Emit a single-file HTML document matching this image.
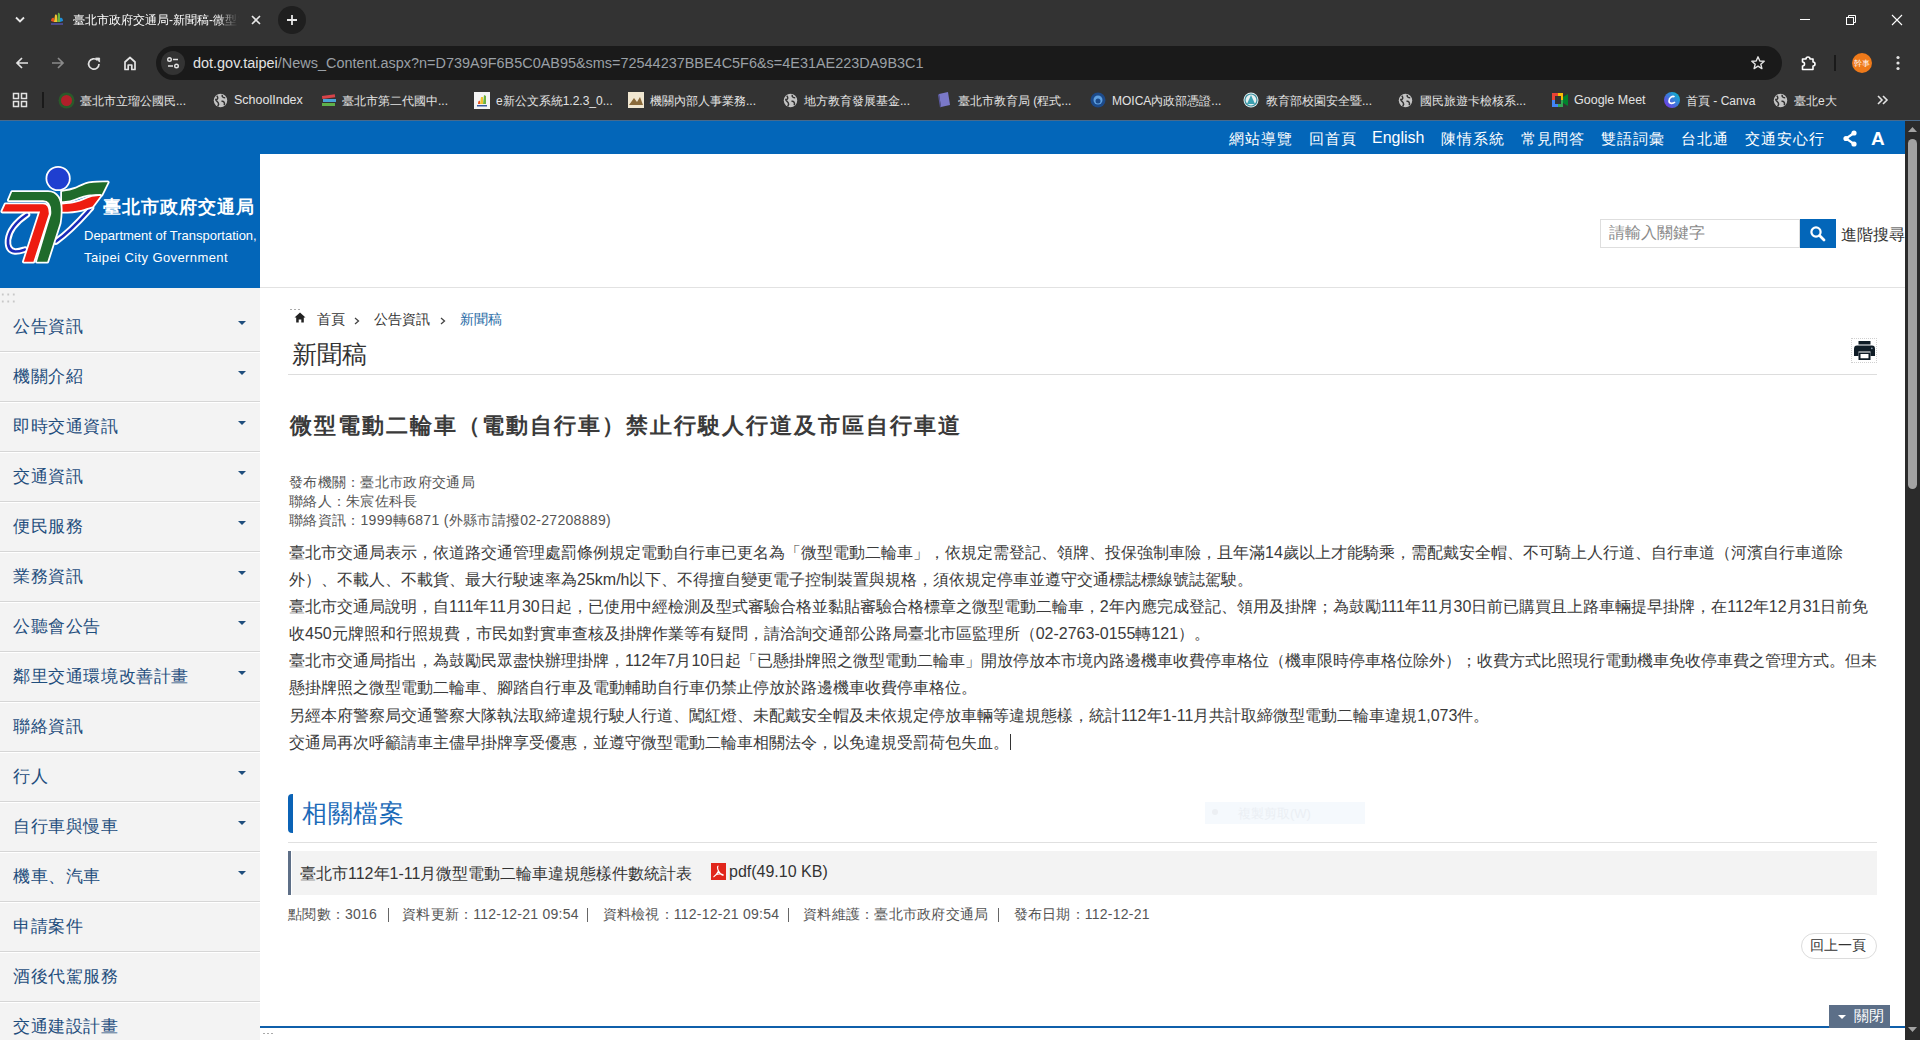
<!DOCTYPE html>
<html><head><meta charset="utf-8">
<style>
*{margin:0;padding:0;box-sizing:border-box}
html,body{width:1920px;height:1040px;overflow:hidden;background:#fff;font-family:"Liberation Sans",sans-serif}
.a{position:absolute}
#chrome{position:absolute;left:0;top:0;width:1920px;height:120px;background:#333333;color:#e3e3e3}
.ttl{position:absolute;white-space:nowrap}
#page{position:absolute;left:0;top:120px;width:1905px;height:920px;background:#fff;overflow:hidden}
#sb{position:absolute;left:1905px;top:120px;width:15px;height:920px;background:#2b2b2b}
#topnav{position:absolute;left:0;top:0;width:1905px;height:34px;background:#0366b9}
.tn{position:absolute;top:9.5px;color:#fff;font-size:15px;letter-spacing:1px;white-space:nowrap}
#logo{position:absolute;left:0;top:34px;width:260px;height:134px;background:#0366b9}
#hdr-line{position:absolute;left:260px;top:167px;width:1645px;height:1px;background:#e2e2e2}
#side{position:absolute;left:0;top:168px;width:260px;height:752px;background:#f3f3f3}
.si{position:absolute;left:0;width:260px;height:50px;border-bottom:1px solid #d6d6d6;box-shadow:0 1px 0 #fff;z-index:1}
.si span{position:absolute;left:13px;top:13px;font-size:17px;letter-spacing:0.6px;color:#1f4e7d;white-space:nowrap}
.si i{position:absolute;left:238px;top:19px;width:0;height:0;border-left:4px solid transparent;border-right:4px solid transparent;border-top:4px solid #1f4e7d}
.bc{top:191px;font-size:14px;color:#333}
.meta{font-size:14px;line-height:19px;color:#555;white-space:nowrap;letter-spacing:0.3px}
.body{font-size:16px;line-height:27.1px;color:#3a3a3a;white-space:nowrap}
.ft{top:786px;font-size:14px;color:#555;letter-spacing:0.25px}
</style></head><body>
<div id="chrome">
  <!-- tab strip -->
  <svg class="a" style="left:14px;top:14px" width="12" height="12" viewBox="0 0 12 12"><path d="M2 3.5 L6 7.5 L10 3.5" stroke="#e8e8e8" stroke-width="1.8" fill="none"/></svg>
  <svg class="a" style="left:48px;top:11px" width="17" height="17" viewBox="0 0 17 17">
    <path d="M3 10 C3 7 5 6 6 7 L6 11 Z" fill="#e8531e"/><path d="M6 11 L7 4 C8 3 9 4 9 5 L9 11 Z" fill="#f2c230"/><path d="M9 11 L10 2 C11 1 12 3 12 4 L12 11Z" fill="#6cb33f"/><path d="M12 11 L12 7 C14 6 15 8 15 10Z" fill="#1f8fd6"/><rect x="3" y="12" width="12" height="2" fill="#4a4a8a"/></svg>
  <div class="ttl" style="left:73px;top:12px;font-size:12px;color:#fff;width:166px;overflow:hidden;-webkit-mask-image:linear-gradient(90deg,#000 86%,transparent)">臺北市政府交通局-新聞稿-微型電動</div>
  <svg class="a" style="left:250px;top:14px" width="12" height="12" viewBox="0 0 12 12"><path d="M2 2 L10 10 M10 2 L2 10" stroke="#e8e8e8" stroke-width="1.6"/></svg>
  <div class="a" style="left:278px;top:6px;width:28px;height:28px;border-radius:14px;background:#1f1f1f"></div>
  <svg class="a" style="left:286px;top:14px" width="12" height="12" viewBox="0 0 12 12"><path d="M6 1 V11 M1 6 H11" stroke="#e8e8e8" stroke-width="1.8"/></svg>
  <svg class="a" style="left:1798px;top:12px" width="14" height="14" viewBox="0 0 14 14"><path d="M2 7.5 H12" stroke="#fff" stroke-width="1"/></svg>
  <svg class="a" style="left:1844px;top:13px" width="14" height="14" viewBox="0 0 14 14"><rect x="2.5" y="4.5" width="7" height="7" stroke="#fff" fill="none"/><path d="M4.5 4.5 V2.5 H11.5 V9.5 H9.5" stroke="#fff" fill="none"/></svg>
  <svg class="a" style="left:1890px;top:13px" width="14" height="14" viewBox="0 0 14 14"><path d="M2 2 L12 12 M12 2 L2 12" stroke="#fff" stroke-width="1.1"/></svg>
  <!-- toolbar -->
  <svg class="a" style="left:14px;top:55px" width="16" height="16" viewBox="0 0 16 16"><path d="M14 8 H3 M8 3 L3 8 L8 13" stroke="#e3e3e3" stroke-width="1.7" fill="none"/></svg>
  <svg class="a" style="left:50px;top:55px" width="16" height="16" viewBox="0 0 16 16"><path d="M2 8 H13 M8 3 L13 8 L8 13" stroke="#8a8a8a" stroke-width="1.7" fill="none"/></svg>
  <svg class="a" style="left:86px;top:56px" width="16" height="16" viewBox="0 0 16 16"><path d="M13 8 A5.2 5.2 0 1 1 11.4 4.2" stroke="#e3e3e3" stroke-width="1.7" fill="none"/><path d="M9.5 2 H13.6 V6.1 Z" fill="#e3e3e3" stroke="#e3e3e3" stroke-width="0.8"/></svg>
  <svg class="a" style="left:122px;top:55px" width="16" height="16" viewBox="0 0 16 16"><path d="M3 14.5 V7 L8 2.5 L13 7 V14.5 H9.8 V10 H6.2 V14.5 Z" stroke="#e3e3e3" stroke-width="1.7" fill="none" stroke-linejoin="round"/></svg>
  <div class="a" style="left:156px;top:46px;width:1626px;height:34px;border-radius:17px;background:#1a1a1a"></div>
  <div class="a" style="left:161px;top:51px;width:24px;height:24px;border-radius:12px;background:#333"></div>
  <svg class="a" style="left:165px;top:55px" width="16" height="16" viewBox="0 0 16 16"><circle cx="4.5" cy="4.5" r="1.8" stroke="#e3e3e3" stroke-width="1.4" fill="none"/><path d="M8 4.5 H13" stroke="#e3e3e3" stroke-width="1.5"/><circle cx="11.5" cy="11" r="1.8" stroke="#e3e3e3" stroke-width="1.4" fill="none"/><path d="M3 11 H8" stroke="#e3e3e3" stroke-width="1.5"/></svg>
  <div class="ttl" style="left:193px;top:54.5px;font-size:14.45px;color:#e3e3e3">dot.gov.taipei<span style="color:#9aa0a6">/News_Content.aspx?n=D739A9F6B5C0AB95&amp;sms=72544237BBE4C5F6&amp;s=4E31AE223DA9B3C1</span></div>
  <svg class="a" style="left:1750px;top:55px" width="16" height="16" viewBox="0 0 16 16"><path d="M8 1.8 L9.8 6 L14.2 6.3 L10.8 9.2 L11.9 13.6 L8 11.2 L4.1 13.6 L5.2 9.2 L1.8 6.3 L6.2 6 Z" stroke="#e3e3e3" stroke-width="1.4" fill="none" stroke-linejoin="round"/></svg>
  <svg class="a" style="left:1800px;top:54px" width="18" height="18" viewBox="0 0 18 18"><path d="M2.5 5 H6 A2 2 0 0 1 10 5 H13 V8 A2 2 0 0 1 13 12 V15.5 H2.5 V12 A2 2 0 0 0 2.5 8 Z" stroke="#fff" stroke-width="1.6" fill="none" stroke-linejoin="round"/></svg>
  <div class="a" style="left:1834px;top:55px;width:2px;height:16px;background:#1a1a1a"></div>
  <div class="a" style="left:1852px;top:53px;width:20px;height:20px;border-radius:10px;background:#ef7a1a"></div>
  <div class="ttl" style="left:1854px;top:58px;font-size:8px;color:#fff">幹事</div>
  <svg class="a" style="left:1890px;top:54px" width="16" height="18" viewBox="0 0 16 18"><circle cx="8" cy="3.5" r="1.6" fill="#e3e3e3"/><circle cx="8" cy="9" r="1.6" fill="#e3e3e3"/><circle cx="8" cy="14.5" r="1.6" fill="#e3e3e3"/></svg>
  <!-- bookmarks -->
  <svg class="a" style="left:12px;top:92px" width="16" height="16" viewBox="0 0 16 16"><rect x="1.5" y="1.5" width="5" height="5" stroke="#e3e3e3" stroke-width="1.5" fill="none"/><rect x="9.5" y="1.5" width="5" height="5" stroke="#e3e3e3" stroke-width="1.5" fill="none"/><rect x="1.5" y="9.5" width="5" height="5" stroke="#e3e3e3" stroke-width="1.5" fill="none"/><rect x="9.5" y="9.5" width="5" height="5" stroke="#e3e3e3" stroke-width="1.5" fill="none"/></svg>
  <div class="a" style="left:42px;top:92px;width:2px;height:16px;background:#1a1a1a"></div>
  <svg class="a" style="left:58px;top:92px" width="17" height="17" viewBox="0 0 17 17"><circle cx="8.5" cy="8.5" r="8" fill="#2a5a2a"/><circle cx="8.5" cy="8.5" r="5.5" fill="#b0202a"/></svg>
  <div class="ttl" style="left:80px;top:93px;font-size:12px;color:#e3e3e3">臺北市立瑠公國民...</div>
  <svg class="a" style="left:213px;top:93px" width="15" height="15" viewBox="0 0 16 16"><circle cx="8" cy="8" r="7.2" fill="#c4c4c4"/><path d="M4 3 C6 5 5 7 3 7 C3 9 6 9 6 12 L5 14.5 M10 2 C9 4 11 5 13 5 M9 9 C11 8 13 10 12 13" stroke="#333" stroke-width="1.6" fill="none"/></svg>
  <div class="ttl" style="left:234px;top:93px;font-size:12.5px;color:#e3e3e3">SchoolIndex</div>
  <svg class="a" style="left:321px;top:92px" width="16" height="16" viewBox="0 0 16 16"><rect x="1" y="3" width="13" height="3" fill="#d8444a" transform="rotate(-8 8 4)"/><rect x="2" y="7" width="13" height="3" fill="#4aa3d8"/><rect x="1" y="11" width="13" height="3" fill="#5fb04a"/></svg>
  <div class="ttl" style="left:342px;top:93px;font-size:12px;color:#e3e3e3">臺北市第二代國中...</div>
  <svg class="a" style="left:474px;top:92px" width="16" height="17" viewBox="0 0 16 17"><rect x="0" y="0" width="16" height="17" fill="#f4f4f4"/><path d="M4 12 C4 9 5 8 6 9 V12Z" fill="#e8531e"/><path d="M6 12 L7 5 L9 5 V12Z" fill="#f2c230"/><path d="M9 12 L10 3 L12 4 V12Z" fill="#6cb33f"/><rect x="3" y="13" width="10" height="1.5" fill="#3a5aa0"/></svg>
  <div class="ttl" style="left:496px;top:93px;font-size:12px;color:#e3e3e3">e新公文系統1.2.3_0...</div>
  <svg class="a" style="left:628px;top:92px" width="16" height="16" viewBox="0 0 16 16"><rect x="0" y="0" width="16" height="16" fill="#f0e6d0"/><path d="M1 13 L6 6 L9 10 L12 5 L15 13Z" fill="#8a6a3a"/></svg>
  <div class="ttl" style="left:650px;top:93px;font-size:12px;color:#e3e3e3">機關內部人事業務...</div>
  <svg class="a" style="left:783px;top:93px" width="15" height="15" viewBox="0 0 16 16"><circle cx="8" cy="8" r="7.2" fill="#c4c4c4"/><path d="M4 3 C6 5 5 7 3 7 C3 9 6 9 6 12 L5 14.5 M10 2 C9 4 11 5 13 5 M9 9 C11 8 13 10 12 13" stroke="#333" stroke-width="1.6" fill="none"/></svg>
  <div class="ttl" style="left:804px;top:93px;font-size:12px;color:#e3e3e3">地方教育發展基金...</div>
  <svg class="a" style="left:937px;top:92px" width="14" height="16" viewBox="0 0 14 16"><path d="M2 2 L11 0 L13 13 L4 15Z" fill="#7a78c8"/><path d="M2 2 L4 15 L3 15.5 L1 3Z" fill="#5a58a0"/></svg>
  <div class="ttl" style="left:958px;top:93px;font-size:12px;color:#e3e3e3">臺北市教育局 (程式...</div>
  <svg class="a" style="left:1090px;top:92px" width="16" height="16" viewBox="0 0 16 16"><circle cx="8" cy="8" r="7.5" fill="#1c4a8a"/><circle cx="8" cy="8" r="4.5" fill="#5fa0e0"/><circle cx="8" cy="9" r="2.5" fill="#1c4a8a"/></svg>
  <div class="ttl" style="left:1112px;top:93px;font-size:12px;color:#e3e3e3">MOICA內政部憑證...</div>
  <svg class="a" style="left:1243px;top:92px" width="16" height="16" viewBox="0 0 16 16"><circle cx="8" cy="8" r="7.5" fill="#e8f0f0"/><circle cx="8" cy="8" r="6" fill="none" stroke="#3a90a0" stroke-width="1.2"/><path d="M8 3 L12 12 H4Z" fill="#3aa0b0"/></svg>
  <div class="ttl" style="left:1266px;top:93px;font-size:12px;color:#e3e3e3">教育部校園安全暨...</div>
  <svg class="a" style="left:1398px;top:93px" width="15" height="15" viewBox="0 0 16 16"><circle cx="8" cy="8" r="7.2" fill="#c4c4c4"/><path d="M4 3 C6 5 5 7 3 7 C3 9 6 9 6 12 L5 14.5 M10 2 C9 4 11 5 13 5 M9 9 C11 8 13 10 12 13" stroke="#333" stroke-width="1.6" fill="none"/></svg>
  <div class="ttl" style="left:1420px;top:93px;font-size:12px;color:#e3e3e3">國民旅遊卡檢核系...</div>
  <svg class="a" style="left:1552px;top:93px" width="17" height="14" viewBox="0 0 17 14"><rect x="0" y="0" width="6" height="7" fill="#ea4335"/><rect x="0" y="7" width="6" height="7" fill="#4285f4"/><rect x="6" y="0" width="5" height="7" fill="#fbbc04"/><rect x="6" y="7" width="5" height="7" fill="#34a853"/><path d="M11 4 L16 1 V13 L11 10Z" fill="#00832d"/><rect x="3" y="3" width="6" height="8" fill="#333"/></svg>
  <div class="ttl" style="left:1574px;top:93px;font-size:12.5px;color:#e3e3e3">Google Meet</div>
  <svg class="a" style="left:1664px;top:92px" width="16" height="16" viewBox="0 0 16 16"><defs><linearGradient id="cg" x1="0" y1="1" x2="1" y2="0"><stop offset="0" stop-color="#7d2ae8"/><stop offset="1" stop-color="#00c4cc"/></linearGradient></defs><circle cx="8" cy="8" r="8" fill="url(#cg)"/><path d="M10.5 5 C9 3.5 5 5 5 9 C5 12 9 12 11 10" stroke="#fff" stroke-width="1.6" fill="none"/></svg>
  <div class="ttl" style="left:1686px;top:93px;font-size:12px;color:#e3e3e3">首頁 - Canva</div>
  <svg class="a" style="left:1773px;top:93px" width="15" height="15" viewBox="0 0 16 16"><circle cx="8" cy="8" r="7.2" fill="#c4c4c4"/><path d="M4 3 C6 5 5 7 3 7 C3 9 6 9 6 12 L5 14.5 M10 2 C9 4 11 5 13 5 M9 9 C11 8 13 10 12 13" stroke="#333" stroke-width="1.6" fill="none"/></svg>
  <div class="ttl" style="left:1794px;top:93px;font-size:12px;color:#e3e3e3">臺北e大</div>
  <svg class="a" style="left:1876px;top:94px" width="14" height="12" viewBox="0 0 14 12"><path d="M2 2 L6 6 L2 10 M7 2 L11 6 L7 10" stroke="#e3e3e3" stroke-width="1.6" fill="none"/></svg>
</div>
<div id="page">
  <div id="topnav">
    <span class="tn" style="left:1229px">網站導覽</span>
    <span class="tn" style="left:1309px">回首頁</span>
    <span class="tn" style="left:1372px;top:9px;font-size:16px;letter-spacing:0">English</span>
    <span class="tn" style="left:1441px">陳情系統</span>
    <span class="tn" style="left:1521px">常見問答</span>
    <span class="tn" style="left:1601px">雙語詞彙</span>
    <span class="tn" style="left:1681px">台北通</span>
    <span class="tn" style="left:1745px">交通安心行</span>
    <svg class="a" style="left:1842px;top:9px" width="16" height="18" viewBox="0 0 16 18"><circle cx="12" cy="4" r="2.6" fill="#fff"/><circle cx="4" cy="9.5" r="2.6" fill="#fff"/><circle cx="12" cy="15" r="2.6" fill="#fff"/><path d="M12 4 L4 9.5 L12 15" stroke="#fff" stroke-width="2.2" fill="none"/></svg>
    <div class="ttl" style="left:1871px;top:7.5px;font-size:19px;font-weight:bold;color:#fff">A</div>
  </div>
  <div id="logo">
    <svg class="a" style="left:0;top:0" width="112" height="134" viewBox="0 0 112 134">
      <g fill="none" stroke-linecap="round">
        <path d="M27 60.5 C16 68 9 77 8 86 C7.5 93 10 97 15 97.5 C19 97.8 22 96.5 25 95.5" stroke="#fff" stroke-width="6.5"/>
        <path d="M27 60.5 C16 68 9 77 8 86 C7.5 93 10 97 15 97.5 C19 97.8 22 96.5 25 95.5" stroke="#1a2ab8" stroke-width="2.6"/>
        <path d="M91 54 C82 64 72 76 56 87.5" stroke="#fff" stroke-width="6.5"/>
        <path d="M91 54 C82 64 72 76 56 87.5" stroke="#1a2ab8" stroke-width="2.6"/>
      </g>
      <g stroke="#fff" stroke-width="3.6" paint-order="stroke" stroke-linejoin="round">
      <path d="M62 37.7 C68 37 72 36 76 34.5 C80 32.5 84 30.5 89 29.2 C95 28.3 101 28.2 107.8 28.2 L101.5 40.9 C96 40.6 92 40.3 88 40.8 C82 42 76 44.5 70 46.5 C67 47 64 47.2 62 47.2 Z" fill="#1f6b2b"/>
      <path d="M62 50.4 C68 50.2 72 49.6 76 48.6 C81 47.4 86 44.8 92 42.8 C95 42.2 98 42 100.4 41.9 L92.5 52.5 C88 53.8 85 55 81 56 C76 57.2 70 57.8 62 57.8 Z" fill="#ee1c10"/>
      <path d="M12.1 38.1 L48 38.1 C57 38.1 61 46 60.8 56 C60.7 62 60.3 66 59.7 69.3 L47.3 107.7 L36.9 107.7 L51.2 60 Q52 46.3 43 46.3 L8.7 46.3 Z" fill="#1f6b2b"/>
      <path d="M5.5 50.2 L43 50.2 Q49 50.2 48.8 60 L33.4 107.7 L23.8 107.7 L40.1 57.6 L2.2 57.6 Z" fill="#ee1c10"/>
      <circle cx="58.1" cy="24.5" r="10.8" fill="#1f3fd0"/>
      </g>
    </svg>
    <div class="ttl" style="left:103px;top:41px;font-size:18px;font-weight:bold;color:#fff;letter-spacing:1px">臺北市政府交通局</div>
    <div class="ttl" style="left:84px;top:74px;font-size:13px;color:#fff">Department of Transportation,</div>
    <div class="ttl" style="left:84px;top:96px;font-size:13px;color:#fff;letter-spacing:0.4px">Taipei City Government</div>
  </div>
  <div class="a" style="left:2px;top:173px;width:12px;height:10px;background-image:radial-gradient(circle,#bbb 0.9px,transparent 1.1px);background-size:4px 4px"></div>
  <div id="hdr-line"></div>
  <div class="a" style="left:1600px;top:99px;width:200px;height:29px;border:1px solid #dedede;background:#fff"></div>
  <div class="ttl" style="left:1609px;top:103px;font-size:16px;color:#8a8a8a">請輸入關鍵字</div>
  <div class="a" style="left:1800px;top:99px;width:36px;height:29px;background:#0366b9"></div>
  <svg class="a" style="left:1809px;top:105px" width="18" height="18" viewBox="0 0 18 18"><circle cx="7" cy="7" r="4.6" stroke="#fff" stroke-width="2.2" fill="none"/><path d="M10.5 10.5 L15 15" stroke="#fff" stroke-width="2.8" stroke-linecap="round"/></svg>
  <div class="ttl" style="left:1841px;top:105px;font-size:16px;color:#333">進階搜尋</div>
  <div id="side">
    <div class="a" style="left:0px;top:3px;width:16px;height:13px;background-image:radial-gradient(circle,#c8c8c8 1px,transparent 1.2px);background-size:5.5px 7px"></div>
    <div class="si" style="top:14px"><span>公告資訊</span><i></i></div>
    <div class="si" style="top:64px"><span>機關介紹</span><i></i></div>
    <div class="si" style="top:114px"><span>即時交通資訊</span><i></i></div>
    <div class="si" style="top:164px"><span>交通資訊</span><i></i></div>
    <div class="si" style="top:214px"><span>便民服務</span><i></i></div>
    <div class="si" style="top:264px"><span>業務資訊</span><i></i></div>
    <div class="si" style="top:314px"><span>公聽會公告</span><i></i></div>
    <div class="si" style="top:364px"><span>鄰里交通環境改善計畫</span><i></i></div>
    <div class="si" style="top:414px"><span>聯絡資訊</span></div>
    <div class="si" style="top:464px"><span>行人</span><i></i></div>
    <div class="si" style="top:514px"><span>自行車與慢車</span><i></i></div>
    <div class="si" style="top:564px"><span>機車、汽車</span><i></i></div>
    <div class="si" style="top:614px"><span>申請案件</span></div>
    <div class="si" style="top:664px"><span>酒後代駕服務</span></div>
    <div class="si" style="top:714px"><span>交通建設計畫</span></div>
  </div>
  <div id="main">
    <div class="a" style="left:289px;top:188px;width:12px;height:3px;background-image:radial-gradient(circle,#aaa 0.7px,transparent 0.9px);background-size:4px 3px"></div>
    <svg class="a" style="left:294px;top:192px" width="12" height="11" viewBox="0 0 12 11"><path d="M6 0.5 L11.5 5.5 H9.8 V10.5 H7.3 V7.5 H4.7 V10.5 H2.2 V5.5 H0.5 Z" fill="#222"/></svg>
    <div class="ttl bc" style="left:317px">首頁</div>
    <svg class="a" style="left:354px;top:197px" width="6" height="8" viewBox="0 0 6 8"><path d="M1 1 L4.5 4 L1 7" stroke="#444" stroke-width="1.3" fill="none"/></svg>
    <div class="ttl bc" style="left:374px">公告資訊</div>
    <svg class="a" style="left:440px;top:197px" width="6" height="8" viewBox="0 0 6 8"><path d="M1 1 L4.5 4 L1 7" stroke="#444" stroke-width="1.3" fill="none"/></svg>
    <div class="ttl bc" style="left:460px;color:#1f6aa5">新聞稿</div>
    <div class="ttl" style="left:292px;top:218px;font-size:25px;color:#333">新聞稿</div>
    <div class="a" style="left:288px;top:254px;width:1589px;height:1px;background:#dddddd"></div>
    <div class="a" style="left:1851px;top:218px;width:26px;height:25px;border:1px dotted #d0d0d0"></div>
    <svg class="a" style="left:1854px;top:221px" width="21" height="19" viewBox="0 0 21 19"><rect x="4.5" y="0" width="12" height="3.5" fill="#0f1c26"/><path d="M0 8 C0 5.5 1 4.5 3 4.5 H18 C20 4.5 21 5.5 21 8 V15 H16.5 V10.5 H4.5 V15 H0 Z" fill="#0f1c26"/><path d="M4.5 11.5 H16.5 V19 H4.5 Z M6.5 13 V17.3 H14.5 V13 Z" fill="#0f1c26" fill-rule="evenodd"/><circle cx="17.8" cy="7.3" r="0.9" fill="#8a9aa8"/></svg>
    <div class="ttl" style="left:290px;top:291px;font-size:22px;letter-spacing:2px;font-weight:bold;color:#3a3a3a">微型電動二輪車（電動自行車）禁止行駛人行道及市區自行車道</div>
    <div class="a meta" style="left:289px;top:353px">發布機關：臺北市政府交通局<br>聯絡人：朱宸佐科長<br>聯絡資訊：1999轉6871 (外縣市請撥02-27208889)</div>
    <div class="a body" style="left:289px;top:419px">臺北市交通局表示，依道路交通管理處罰條例規定電動自行車已更名為「微型電動二輪車」，依規定需登記、領牌、投保強制車險，且年滿14歲以上才能騎乘，需配戴安全帽、不可騎上人行道、自行車道（河濱自行車道除<br>外）、不載人、不載貨、最大行駛速率為25km/h以下、不得擅自變更電子控制裝置與規格，須依規定停車並遵守交通標誌標線號誌駕駛。<br>臺北市交通局說明，自111年11月30日起，已使用中經檢測及型式審驗合格並黏貼審驗合格標章之微型電動二輪車，2年內應完成登記、領用及掛牌；為鼓勵111年11月30日前已購買且上路車輛提早掛牌，在112年12月31日前免<br>收450元牌照和行照規費，市民如對實車查核及掛牌作業等有疑問，請洽詢交通部公路局臺北市區監理所（02-2763-0155轉121）。<br>臺北市交通局指出，為鼓勵民眾盡快辦理掛牌，112年7月10日起「已懸掛牌照之微型電動二輪車」開放停放本市境內路邊機車收費停車格位（機車限時停車格位除外）；收費方式比照現行電動機車免收停車費之管理方式。但未<br>懸掛牌照之微型電動二輪車、腳踏自行車及電動輔助自行車仍禁止停放於路邊機車收費停車格位。<br>另經本府警察局交通警察大隊執法取締違規行駛人行道、闖紅燈、未配戴安全帽及未依規定停放車輛等違規態樣，統計112年1-11月共計取締微型電動二輪車違規1,073件。<br>交通局再次呼籲請車主儘早掛牌享受優惠，並遵守微型電動二輪車相關法令，以免違規受罰荷包失血。<span style="display:inline-block;width:1px;height:16px;background:#333;vertical-align:-2px;margin-left:1px"></span></div>
    <div class="a" style="left:288px;top:674px;width:5px;height:39px;border-radius:4px 0 0 4px;background:#0b63b6"></div>
    <div class="ttl" style="left:302px;top:677px;font-size:25px;letter-spacing:0.7px;color:#1a6ab8">相關檔案</div>
    <div class="a" style="left:1205px;top:682px;width:160px;height:22px;background:#f5f9fd"></div>
    <div class="ttl" style="left:1238px;top:685px;font-size:13px;color:#ebeff4">複製剪取(W)</div>
    <div class="a" style="left:1212px;top:689px;width:6px;height:6px;border-radius:3px;background:#eceff3"></div>
    <div class="a" style="left:288px;top:722px;width:1589px;height:1px;background:#e0e0e0"></div>
    <div class="a" style="left:292px;top:731px;width:1585px;height:44px;background:#f3f3f3"></div>
    <div class="a" style="left:288px;top:731px;width:3px;height:44px;background:#5e6f87"></div>
    <div class="ttl" style="left:300px;top:744px;font-size:16px;color:#333">臺北市112年1-11月微型電動二輪車違規態樣件數統計表</div>
    <svg class="a" style="left:711px;top:743px" width="15" height="17" viewBox="0 0 15 17"><rect x="0" y="0" width="15" height="17" fill="#e1261c"/><path d="M7.5 3 C6 3 6.5 6 7.5 8 C8.5 10 10 12 12.5 12.5 M7.5 8 C6.5 10 4.5 13 2.5 14 M5 11.5 C7.5 10.5 10 10.5 12.5 12" stroke="#fff" stroke-width="1.2" fill="none"/></svg>
    <div class="ttl" style="left:729px;top:743px;font-size:16px;color:#333">pdf(49.10 KB)</div>
    <div class="ttl ft" style="left:288px">點閱數：3016</div>
    <div class="ttl ft" style="left:402px">資料更新：112-12-21 09:54</div>
    <div class="ttl ft" style="left:602.5px">資料檢視：112-12-21 09:54</div>
    <div class="ttl ft" style="left:803px">資料維護：臺北市政府交通局</div>
    <div class="ttl ft" style="left:1013.5px">發布日期：112-12-21</div>
    <div class="a" style="left:388px;top:788px;width:1px;height:14px;background:#666"></div>
    <div class="a" style="left:587px;top:788px;width:1px;height:14px;background:#666"></div>
    <div class="a" style="left:787.5px;top:788px;width:1px;height:14px;background:#666"></div>
    <div class="a" style="left:998px;top:788px;width:1px;height:14px;background:#666"></div>
    <div class="a" style="left:1801px;top:813px;width:76px;height:26px;border:1px solid #dcdcdc;border-radius:13px;background:#fff"></div>
    <div class="ttl" style="left:1810px;top:817px;font-size:14px;color:#333">回上一頁</div>
    <div class="a" style="left:260px;top:906px;width:1645px;height:2px;background:#0f5faa"></div>
    <div class="a" style="left:1829px;top:885px;width:61px;height:23px;background:#5c6f88"></div>
    <div class="a" style="left:1838px;top:895px;width:0;height:0;border-left:4px solid transparent;border-right:4px solid transparent;border-top:4px solid #fff"></div>
    <div class="ttl" style="left:1854px;top:887px;font-size:15px;color:#fff">關閉</div>
    <div class="a" style="left:262px;top:912px;width:12px;height:3px;background-image:radial-gradient(circle,#aaa 0.7px,transparent 0.9px);background-size:4px 3px"></div>
  </div>
</div>
<div class="a" style="left:0;top:120px;width:1920px;height:1px;background:#486a8c;z-index:5"></div>
<div id="sb">
  <svg class="a" style="left:3px;top:7px" width="9" height="5" viewBox="0 0 9 5"><path d="M0 5 L4.5 0 L9 5Z" fill="#a3a3a3"/></svg>
  <div class="a" style="left:3px;top:19px;width:9px;height:350px;border-radius:4.5px;background:#a3a3a3"></div>
  <svg class="a" style="left:3px;top:907px" width="9" height="5" viewBox="0 0 9 5"><path d="M0 0 L4.5 5 L9 0Z" fill="#a3a3a3"/></svg>
</div>
</body></html>
